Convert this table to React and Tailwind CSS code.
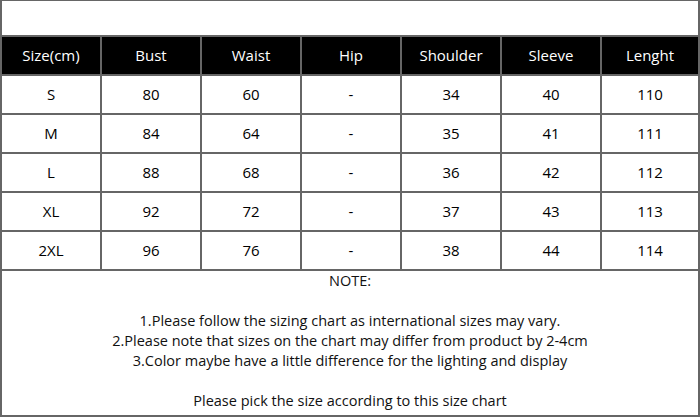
const headers = ['Size(cm)', 'Bust', 'Waist', 'Hip', 'Shoulder', 'Sleeve', 'Lenght'];

const rows = [
  ['S', '80', '60', '-', '34', '40', '110'],
  ['M', '84', '64', '-', '35', '41', '111'],
  ['L', '88', '68', '-', '36', '42', '112'],
  ['XL', '92', '72', '-', '37', '43', '113'],
  ['2XL', '96', '76', '-', '38', '44', '114'],
];

const gridCols = 'grid grid-cols-[98px_98px_98px_98px_98px_98px_1fr] gap-x-[2px]';

export default function App() {
  return (
    <div
      className="w-[700px] h-[417px] bg-white border-t border-x-2 border-b-2 border-[#666] flex flex-col text-[15px] text-black"
      style={{ fontFamily: '"Open Sans", "Noto Sans", sans-serif' }}
    >
      {/* empty strip above the chart */}
      <div className="h-[36px] border-b-2 border-[#666]" />

      {/* header row */}
      <div className={`${gridCols} bg-[#666] -ml-[2px] pl-[2px] border-b-2 border-[#666]`}>
        {headers.map((h) => (
          <div key={h} className="h-[37px] bg-black text-white flex items-center justify-center">
            {h}
          </div>
        ))}
      </div>

      {/* size rows */}
      {rows.map((r) => (
        <div key={r[0]} className={`${gridCols} bg-[#666] -ml-[2px] pl-[2px] border-b-2 border-[#666]`}>
          {r.map((v, i) => (
            <div key={i} className="h-[37px] bg-white flex items-center justify-center">
              {v}
            </div>
          ))}
        </div>
      ))}

      {/* notes */}
      <div className="flex-1 text-center text-[14.5px] leading-[20px] text-[#111]">
        <p>NOTE:</p>
        <p>&nbsp;</p>
        <p>1.Please follow the sizing chart as international sizes may vary.</p>
        <p>2.Please note that sizes on the chart may differ from product by 2-4cm</p>
        <p>3.Color maybe have a little difference for the lighting and display</p>
        <p>&nbsp;</p>
        <p>Please pick the size according to this size chart</p>
      </div>
    </div>
  );
}
